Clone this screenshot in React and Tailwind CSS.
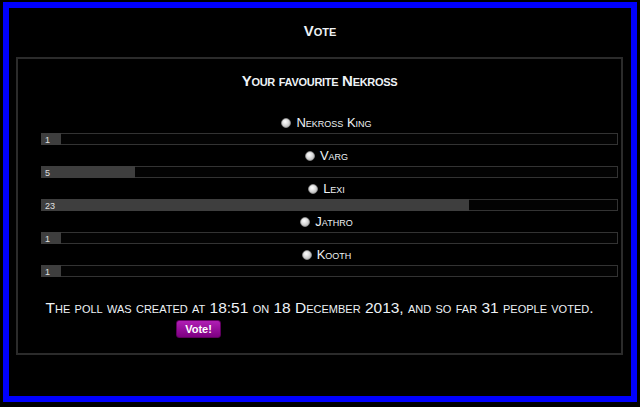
import React from "react";

const options = [
  { name: "Nekross King", votes: 1, w: 20 },
  { name: "Varg", votes: 5, w: 94 },
  { name: "Lexi", votes: 23, w: 428 },
  { name: "Jathro", votes: 1, w: 20 },
  { name: "Kooth", votes: 1, w: 20 },
];

function Radio() {
  return (
    <span className="inline-block w-[10px] h-[10px] rounded-full border border-[#8a8a8a] bg-[radial-gradient(circle_at_40%_35%,#ffffff_0%,#e0e0e0_40%,#a8a8a8_100%)] mr-[5px]" />
  );
}

export default function App() {
  return (
    <div
      className="w-[640px] h-[407px] bg-black pt-[2px] pl-[3px] pr-[3px] pb-[5px] text-[#eef2f6]"
      style={{ fontFamily: '"Liberation Sans", Arial, sans-serif' }}
    >
      <div className="w-[634px] h-[400px] border-[6px] border-[#0000ff] bg-black flex flex-col">
        <div className="pt-[13px] h-[20px] box-content leading-[20px] text-center text-[15px] font-bold [font-variant:small-caps]">
          Vote
        </div>
        <div className="mt-[16px] ml-[7px] w-[607px] border-2 border-[#2b2b2b] bg-black pt-[12px] pb-[15px]">
          <div className="h-[20px] leading-[20px] text-center text-[15px] font-bold tracking-[-0.3px] [font-variant:small-caps]">
            Your favourite Nekross
          </div>
          <div className="mt-[21px] ml-[23px] w-[577px] flex flex-col">
            {options.map((o) => (
              <div key={o.name} className="flex flex-col">
                <div className="h-[21px] pr-[6px] flex items-center justify-center text-[13px] [font-variant:small-caps]">
                  <Radio />
                  <span>{o.name}</span>
                </div>
                <div className="h-[12px] border border-[#333333] bg-[#030303] relative">
                  <div
                    className="absolute left-[-1px] top-[-1px] bottom-[-1px] bg-[#3e3e3e] flex items-center pl-[4px] text-[9px] leading-[12px] text-[#e0e0e0]"
                    style={{ width: o.w + "px" }}
                  >
                    <span className="pt-[2px]">{o.votes}</span>
                  </div>
                </div>
              </div>
            ))}
          </div>
          <div className="mt-[21px] h-[20px] leading-[20px] text-center text-[15.5px] [font-variant:small-caps]">
            The poll was created at 18:51 on 18 December 2013, and so far 31 people voted.
          </div>
          <div className="mt-[2px] ml-[158px]">
            <button className="w-[45px] h-[18px] rounded-[3px] border border-[#5e005e] bg-[linear-gradient(#b01eb4,#7d0082)] text-white text-[11px] font-bold leading-[16px] flex items-center justify-center">
              Vote!
            </button>
          </div>
        </div>
      </div>
    </div>
  );
}
